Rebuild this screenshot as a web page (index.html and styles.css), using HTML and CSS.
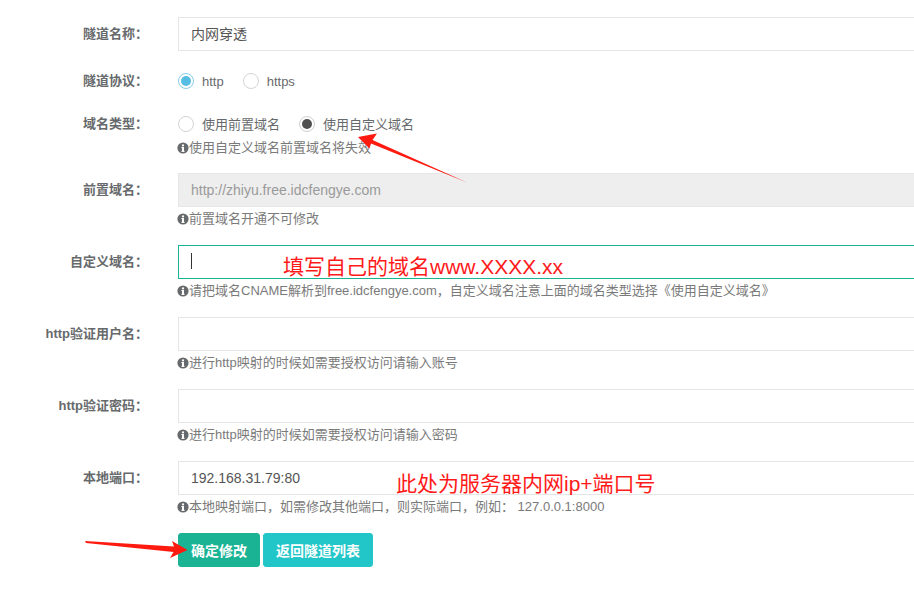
FILE: index.html
```html
<!DOCTYPE html>
<html lang="zh-CN">
<head>
<meta charset="utf-8">
<title>编辑隧道</title>
<link rel="stylesheet" href="styles.css">
</head>
<body>
<div class="page">
  <form class="form">
    <div class="row row-input">
      <label class="lbl">隧道名称：</label>
      <div class="ctl"><div class="input">内网穿透</div></div>
    </div>

    <div class="row row-radio">
      <label class="lbl">隧道协议：</label>
      <div class="ctl radios">
        <span class="opt"><span class="radio checked-blue"></span><span class="opt-text">http</span></span>
        <span class="opt"><span class="radio"></span><span class="opt-text">https</span></span>
      </div>
    </div>

    <div class="row row-radio2 has-help">
      <label class="lbl">域名类型：</label>
      <div class="ctl">
        <div class="radios radios-sm">
          <span class="opt"><span class="radio"></span><span class="opt-text">使用前置域名</span></span>
          <span class="opt"><span class="radio checked-dark"></span><span class="opt-text">使用自定义域名</span></span>
        </div>
        <p class="help help-tight"><svg class="info" viewBox="0 0 12 12"><circle cx="6" cy="6" r="5.6" fill="#676a6c"/><circle cx="6" cy="3.4" r="1.1" fill="#fff"/><rect x="5" y="5" width="2" height="4.6" fill="#fff"/><rect x="4.4" y="5" width="1.6" height="1" fill="#fff"/><rect x="4.4" y="8.8" width="3.2" height="1" fill="#fff"/></svg>使用自定义域名前置域名将失效</p>
      </div>
    </div>

    <div class="row row-input has-help">
      <label class="lbl">前置域名：</label>
      <div class="ctl">
        <div class="input disabled">http://zhiyu.free.idcfengye.com</div>
        <p class="help"><svg class="info" viewBox="0 0 12 12"><circle cx="6" cy="6" r="5.6" fill="#676a6c"/><circle cx="6" cy="3.4" r="1.1" fill="#fff"/><rect x="5" y="5" width="2" height="4.6" fill="#fff"/><rect x="4.4" y="5" width="1.6" height="1" fill="#fff"/><rect x="4.4" y="8.8" width="3.2" height="1" fill="#fff"/></svg>前置域名开通不可修改</p>
      </div>
    </div>

    <div class="row row-input has-help">
      <label class="lbl">自定义域名：</label>
      <div class="ctl">
        <div class="input focus"><span class="caret"></span></div>
        <p class="help"><svg class="info" viewBox="0 0 12 12"><circle cx="6" cy="6" r="5.6" fill="#676a6c"/><circle cx="6" cy="3.4" r="1.1" fill="#fff"/><rect x="5" y="5" width="2" height="4.6" fill="#fff"/><rect x="4.4" y="5" width="1.6" height="1" fill="#fff"/><rect x="4.4" y="8.8" width="3.2" height="1" fill="#fff"/></svg>请把域名CNAME解析到free.idcfengye.com，自定义域名注意上面的域名类型选择《使用自定义域名》</p>
      </div>
    </div>

    <div class="row row-input has-help">
      <label class="lbl">http验证用户名：</label>
      <div class="ctl">
        <div class="input"></div>
        <p class="help"><svg class="info" viewBox="0 0 12 12"><circle cx="6" cy="6" r="5.6" fill="#676a6c"/><circle cx="6" cy="3.4" r="1.1" fill="#fff"/><rect x="5" y="5" width="2" height="4.6" fill="#fff"/><rect x="4.4" y="5" width="1.6" height="1" fill="#fff"/><rect x="4.4" y="8.8" width="3.2" height="1" fill="#fff"/></svg>进行http映射的时候如需要授权访问请输入账号</p>
      </div>
    </div>

    <div class="row row-input has-help">
      <label class="lbl">http验证密码：</label>
      <div class="ctl">
        <div class="input"></div>
        <p class="help"><svg class="info" viewBox="0 0 12 12"><circle cx="6" cy="6" r="5.6" fill="#676a6c"/><circle cx="6" cy="3.4" r="1.1" fill="#fff"/><rect x="5" y="5" width="2" height="4.6" fill="#fff"/><rect x="4.4" y="5" width="1.6" height="1" fill="#fff"/><rect x="4.4" y="8.8" width="3.2" height="1" fill="#fff"/></svg>进行http映射的时候如需要授权访问请输入密码</p>
      </div>
    </div>

    <div class="row row-input has-help">
      <label class="lbl">本地端口：</label>
      <div class="ctl">
        <div class="input">192.168.31.79:80</div>
        <p class="help"><svg class="info" viewBox="0 0 12 12"><circle cx="6" cy="6" r="5.6" fill="#676a6c"/><circle cx="6" cy="3.4" r="1.1" fill="#fff"/><rect x="5" y="5" width="2" height="4.6" fill="#fff"/><rect x="4.4" y="5" width="1.6" height="1" fill="#fff"/><rect x="4.4" y="8.8" width="3.2" height="1" fill="#fff"/></svg>本地映射端口，如需修改其他端口，则实际端口，例如： 127.0.0.1:8000</p>
      </div>
    </div>

    <div class="row row-buttons">
      <span class="lbl"></span>
      <div class="ctl buttons">
        <button type="button" class="btn btn-primary">确定修改</button>
        <button type="button" class="btn btn-info">返回隧道列表</button>
      </div>
    </div>
  </form>

  <div class="note note-domain">填写自己的域名www.XXXX.xx</div>
  <div class="note note-port">此处为服务器内网ip+端口号</div>

  <svg class="arrows" width="914" height="591" viewBox="0 0 914 591">
    <polygon fill="#ff1a0f" points="358,137 377,133.5 372.5,140 467,182.5 371,143.5 369.5,148.5"/>
    <polygon fill="#ff1a0f" points="85,541 174,546.5 172,541 187.5,550 170,558 173.5,552 86,543"/>
  </svg>
</div>
</body>
</html>
```

FILE: styles.css
```css
html, body {
  margin: 0;
  padding: 0;
  background: #ffffff;
  overflow: hidden;
}

body {
  font-family: "Liberation Sans", "Noto Sans CJK SC", Arial, sans-serif;
  color: #676a6c;
  font-size: 13px;
}

.page {
  position: relative;
  width: 914px;
  height: 591px;
  padding-top: 17px;
  box-sizing: border-box;
  overflow: hidden;
}

.form {
  margin: 0;
  width: 1100px;
}

.row {
  display: grid;
  grid-template-columns: 148px 1fr;
  column-gap: 30px;
}

.lbl {
  text-align: right;
  font-weight: bold;
  font-size: 13px;
  color: #676a6c;
  white-space: nowrap;
}

.row-input .lbl { line-height: 34px; }
.row-radio .lbl { line-height: 30px; }
.row-radio2 .lbl { line-height: 26px; }

.row-input { margin-bottom: 15px; }
.row-input.has-help { margin-bottom: 17px; }
.row-radio { margin-bottom: 15px; }
.row-radio2 { margin-bottom: 16px; }

.ctl {
  min-width: 0;
}

.input {
  height: 34px;
  box-sizing: border-box;
  border: 1px solid #e5e6e7;
  padding: 0 12px;
  font-size: 14px;
  line-height: 32px;
  color: #555555;
  white-space: nowrap;
  display: flex;
  align-items: center;
}

.input.disabled {
  background: #eeeeee;
  color: #9a9a9a;
}

.input.focus {
  border-color: #1ab394;
}

.caret {
  display: inline-block;
  width: 1px;
  height: 16px;
  background: #333333;
  margin-top: -3px;
}

.radios {
  display: flex;
  align-items: center;
  height: 30px;
}

.radios-sm {
  height: 25px;
}

.opt {
  display: inline-flex;
  align-items: center;
  margin-right: 19px;
}

.opt-text {
  font-size: 13px;
  color: #676a6c;
  margin-left: 8px;
}

.radio {
  width: 16px;
  height: 16px;
  box-sizing: border-box;
  border-radius: 50%;
  border: 1px solid #d4d4d4;
  background: #fff;
  position: relative;
}

.radio.checked-blue {
  border-color: #87cde9;
}

.radio.checked-blue::after,
.radio.checked-dark::after {
  content: "";
  position: absolute;
  left: 2px;
  top: 2px;
  width: 10px;
  height: 10px;
  border-radius: 50%;
}

.radio.checked-blue::after { background: #56bde3; }
.radio.checked-dark { border-color: #cfcfcf; }
.radio.checked-dark::after { background: #505050; }

.help {
  margin: 3px 0 0 -1px;
  font-size: 13px;
  line-height: 18px;
  color: #7a7a7a;
  display: flex;
  align-items: center;
  white-space: nowrap;
}

.help-tight {
  margin-top: 3px;
}

.info {
  width: 12px;
  height: 12px;
  flex: none;
}

.buttons {
  display: flex;
  gap: 3px;
}

.btn {
  height: 34px;
  box-sizing: border-box;
  border: 1px solid transparent;
  border-radius: 3px;
  padding: 0 12px;
  font-family: "Liberation Sans", "Noto Sans CJK SC", Arial, sans-serif;
  font-size: 14px;
  font-weight: bold;
  color: #ffffff;
  cursor: pointer;
}

.btn-primary {
  background: #1ab394;
  border-color: #1ab394;
}

.btn-info {
  background: #23c6c8;
  border-color: #23c6c8;
}

.note {
  position: absolute;
  font-family: "Liberation Sans", "Noto Sans CJK SC", sans-serif;
  font-size: 21px;
  line-height: 24px;
  color: #ff1a1a;
  white-space: nowrap;
}

.note-domain {
  left: 283px;
  top: 255px;
}

.note-port {
  left: 396px;
  top: 472px;
}

.arrows {
  position: absolute;
  left: 0;
  top: 0;
  pointer-events: none;
}
```
